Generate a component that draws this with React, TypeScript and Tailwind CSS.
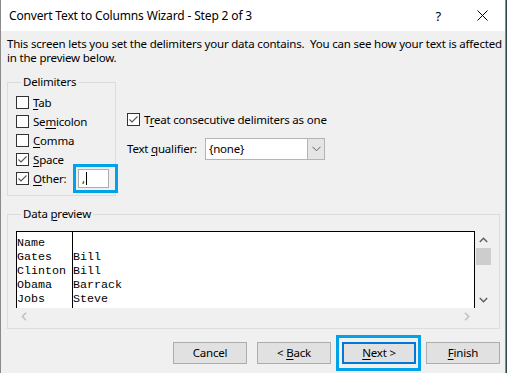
import React from "react";

function Check({ checked }: { checked?: boolean }) {
  return (
    <span className="relative inline-flex h-[13px] w-[13px] shrink-0 border border-[#333333] bg-white">
      {checked && (
        <svg width="11" height="11" viewBox="0 0 11 11" className="absolute left-0 top-0">
          <polyline points="1.5,5.5 4,8 9.5,2.5" fill="none" stroke="#555555" strokeWidth="1.1" />
        </svg>
      )}
    </span>
  );
}

function U({ children }: { children: React.ReactNode }) {
  return <span className="underline underline-offset-[2px] decoration-[1px]">{children}</span>;
}

function Row({ checked, children }: { checked?: boolean; children: React.ReactNode }) {
  return (
    <div className="flex h-[19px] items-center">
      <Check checked={checked} />
      <span className="ml-[4px] whitespace-nowrap">{children}</span>
    </div>
  );
}

function Btn({ children, focused }: { children: React.ReactNode; focused?: boolean }) {
  return (
    <div className="relative">
      <div
        className={
          "flex h-[22px] w-[74px] items-center justify-center bg-[#e1e1e1] " +
          (focused ? "border-2 border-[#0078d7]" : "border border-[#adadad]")
        }
      >
        <span className="whitespace-pre">{children}</span>
      </div>
      {focused && (
        <div className="pointer-events-none absolute -bottom-[7px] -left-[6px] -right-[5px] -top-[7px] border-[3px] border-[#00a2e8]" />
      )}
    </div>
  );
}

const rows: [string, string][] = [
  ["Name", ""],
  ["Gates", "Bill"],
  ["Clinton", "Bill"],
  ["Obama", "Barrack"],
  ["Jobs", "Steve"],
];

export default function App() {
  return (
    <div className="h-[373px] w-[507px] overflow-hidden bg-[#2e4a4a] font-['Noto_Sans',sans-serif] text-[11.5px] leading-[14px] tracking-[-0.2px] text-black">
      <div className="flex h-[373px] w-[506px] flex-col border-l border-r border-[#8a8a8a] bg-[#f0f0f0]">
        {/* Title bar */}
        <div className="flex h-[31px] shrink-0 items-center bg-white">
          <span className="ml-[8px] whitespace-nowrap text-[12px] tracking-[-0.15px]">
            Convert Text to Columns Wizard - Step 2 of 3
          </span>
          <span className="ml-auto mr-[36px] text-[13px]">?</span>
          <svg width="11" height="11" viewBox="0 0 11 11" className="mr-[17px]">
            <path d="M0.5 0.5 L10.5 10.5 M10.5 0.5 L0.5 10.5" stroke="#000" strokeWidth="1" />
          </svg>
        </div>

        <div className="flex flex-col px-[6px]">
          <p className="mt-[6px] whitespace-nowrap">
            This screen lets you set the delimiters your data contains.&nbsp; You can see how your text is affected
            <br />
            in the preview below.
          </p>

          <div className="mt-[10px] flex">
            <fieldset className="h-[121px] w-[109px] shrink-0 border border-[#dcdcdc] pl-[8px] pt-[4px]">
              <legend className="ml-[5px] px-[2px] leading-[14px]">Delimiters</legend>
              <Row>
                <U>T</U>ab
              </Row>
              <Row>
                Se<U>m</U>icolon
              </Row>
              <Row>
                <U>C</U>omma
              </Row>
              <Row checked>
                <U>S</U>pace
              </Row>
              <div className="flex h-[19px] items-center">
                <Check checked />
                <span className="ml-[4px] w-[45px] whitespace-nowrap">
                  <U>O</U>ther:
                </span>
                <div className="relative flex h-[19px] w-[31px] items-center border border-[#adadad] bg-white pl-[3px]">
                  <span className="text-[11px]">,</span>
                  <span className="ml-[1px] h-[13px] w-[1px] bg-black" />
                  <div className="pointer-events-none absolute -bottom-[6px] -left-[6px] -right-[10px] -top-[6px] border-[3px] border-[#00a2e8]" />
                </div>
              </div>
            </fieldset>

            <div className="ml-[11px] flex flex-col pt-[37px]">
              <div className="flex h-[15px] items-center">
                <Check checked />
                <span className="ml-[4px] whitespace-nowrap">
                  T<U>r</U>eat consecutive delimiters as one
                </span>
              </div>
              <div className="mt-[11px] flex items-center">
                <span className="w-[78px] whitespace-nowrap">
                  Text <U>q</U>ualifier:
                </span>
                <div className="flex h-[22px] w-[120px] border border-[#b4b4b4] bg-white">
                  <span className="flex flex-1 items-center pl-[3px]">{"{none}"}</span>
                  <span className="flex w-[17px] items-center justify-center border-l border-[#b4b4b4] bg-[#e5e5e5]">
                    <svg width="9" height="6" viewBox="0 0 9 6">
                      <polyline points="0.5,0.8 4.5,4.8 8.5,0.8" fill="none" stroke="#606060" strokeWidth="1" />
                    </svg>
                  </span>
                </div>
              </div>
            </div>
          </div>

          <fieldset className="mt-[11px] h-[122px] w-[493px] border border-[#dcdcdc] pl-[8px] pt-[10px]">
            <legend className="ml-[5px] px-[2px] leading-[14px]">
              Data <U>p</U>review
            </legend>
            <div className="flex w-[476px] flex-col">
              <div className="flex h-[77px]">
                <div className="flex w-[459px] border-l border-r border-t border-black bg-white font-['Liberation_Mono',monospace] text-[11.67px] leading-[14px] tracking-normal">
                  <div className="w-[56px] border-r border-black pt-[4px]">
                    {rows.map((r) => (
                      <div key={r[0]} className="h-[14px] whitespace-pre">{r[0]}</div>
                    ))}
                  </div>
                  <div className="flex-1 pt-[4px]">
                    {rows.map((r) => (
                      <div key={r[0]} className="h-[14px] whitespace-pre">{r[1]}</div>
                    ))}
                  </div>
                </div>
                <div className="flex w-[17px] flex-col items-center">
                  <div className="flex h-[17px] items-center justify-center">
                    <svg width="9" height="6" viewBox="0 0 9 6">
                      <polyline points="0.8,5 4.5,1.3 8.2,5" fill="none" stroke="#606060" strokeWidth="1.5" />
                    </svg>
                  </div>
                  <div className="h-[17px] w-[15px] bg-[#cdcdcd]" />
                  <div className="flex-1" />
                  <div className="flex h-[17px] items-center justify-center">
                    <svg width="9" height="6" viewBox="0 0 9 6">
                      <polyline points="0.8,1 4.5,4.7 8.2,1" fill="none" stroke="#606060" strokeWidth="1.5" />
                    </svg>
                  </div>
                </div>
              </div>
              <div className="flex h-[17px] w-[459px] items-center justify-between px-[5px]">
                <svg width="6" height="9" viewBox="0 0 6 9">
                  <polyline points="5,0.8 1.3,4.5 5,8.2" fill="none" stroke="#c0c0c0" strokeWidth="1.5" />
                </svg>
                <svg width="6" height="9" viewBox="0 0 6 9">
                  <polyline points="1,0.8 4.7,4.5 1,8.2" fill="none" stroke="#c0c0c0" strokeWidth="1.5" />
                </svg>
              </div>
            </div>
          </fieldset>

          <div className="mt-[13px] flex pl-[166px]">
            <Btn>Cancel</Btn>
            <div className="ml-[10px]">
              <Btn>
                {"< "}
                <U>B</U>ack
              </Btn>
            </div>
            <div className="ml-[11px]">
              <Btn focused>
                <U>N</U>
                {"ext >"}
              </Btn>
            </div>
            <div className="ml-[10px]">
              <Btn>
                <U>F</U>inish
              </Btn>
            </div>
          </div>
        </div>
      </div>
    </div>
  );
}
